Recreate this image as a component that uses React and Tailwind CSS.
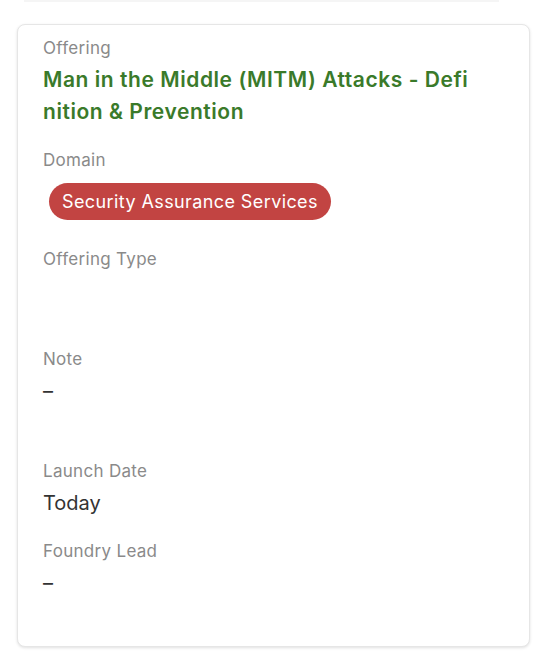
import React from 'react';

function Field({ label, children, className = '' }) {
  return (
    <div className={className}>
      <div className="text-[17px] leading-[24px] tracking-[0.3px] text-[#8a8a8a]">{label}</div>
      {children}
    </div>
  );
}

export default function App() {
  return (
    <div className="min-h-screen bg-white font-['Inter',sans-serif]">
      <div className="mx-[24px] h-[2px] w-[475px] bg-[#f5f5f5]" />
      <div className="mx-[17px] mt-[22px] w-[513px] rounded-lg border border-[#e6e6e6] bg-white pl-[25px] pr-[55px] pt-[11px] pb-[15px] shadow-[0_1px_3px_rgba(0,0,0,0.12)]">
        <Field label="Offering">
          <div className="mt-1 break-all text-[21px] font-semibold leading-[32px] tracking-[0.55px] text-[#3a7a2a]">
            Man in the Middle (MITM) Attacks - Definition &amp; Prevention
          </div>
        </Field>

        <Field label="Domain" className="mt-5">
          <div className="mt-[11px] ml-[6px] inline-flex h-[37px] items-center rounded-full bg-[#c24442] px-[13px] text-[18px] tracking-[0.4px] text-white">
            Security Assurance Services
          </div>
        </Field>

        <Field label="Offering Type" className="mt-[27px]">
          <div className="mt-1 h-[52px]" />
        </Field>

        <Field label="Note" className="mt-5">
          <div className="mt-1 h-16 text-[20px] leading-[32px] text-[#333]">–</div>
        </Field>

        <Field label="Launch Date" className="mt-5">
          <div className="mt-1 text-[20px] leading-[32px] text-[#333]">Today</div>
        </Field>

        <Field label="Foundry Lead" className="mt-5">
          <div className="mt-1 h-16 text-[20px] leading-[32px] text-[#333]">–</div>
        </Field>
      </div>
    </div>
  );
}
